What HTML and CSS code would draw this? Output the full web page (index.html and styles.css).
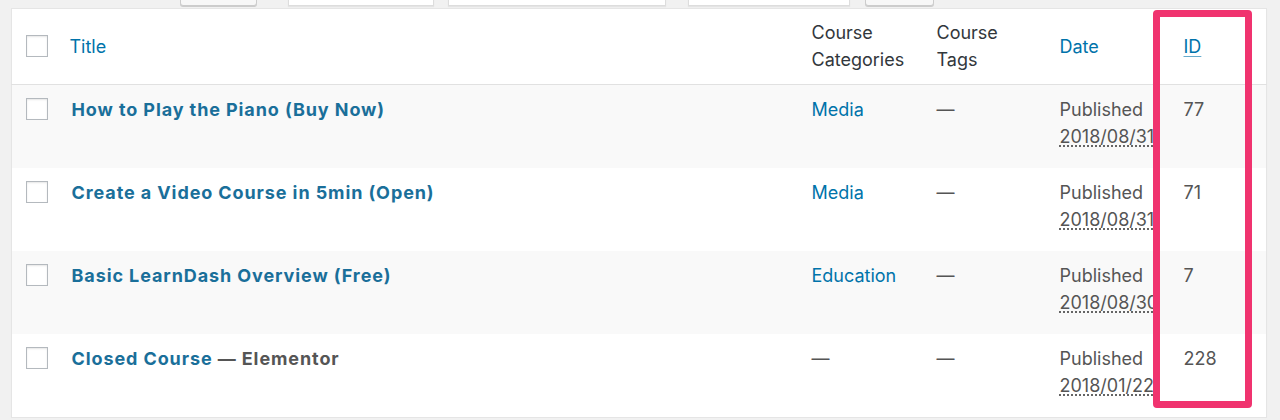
FILE: index.html
```html
<!DOCTYPE html>
<html lang="en">

<head>
    <meta charset="UTF-8">
    <meta name="viewport" content="width=device-width, initial-scale=1.0">
    <title>Courses</title>
    <link rel="stylesheet" href="styles.css">
</head>

<body>

    <div class="wrap">

        <!-- Filtros (solo se ve el borde inferior) -->
        <div class="tablenav">
            <span class="nav-btn btn-a"></span>
            <span class="nav-input input-a"></span>
            <span class="nav-input input-b"></span>
            <span class="nav-input input-c"></span>
            <span class="nav-btn btn-b"></span>
        </div>

        <table class="list-table">
            <colgroup>
                <col class="col-cb">
                <col>
                <col class="col-cat">
                <col class="col-tags">
                <col class="col-date">
                <col class="col-id">
            </colgroup>
            <thead>
                <tr>
                    <th class="check-column"><input type="checkbox" class="cb"></th>
                    <th><a href="#" class="sort-link">Title</a></th>
                    <th>Course Categories</th>
                    <th>Course Tags</th>
                    <th><a href="#" class="sort-link">Date</a></th>
                    <th><a href="#" class="sort-link sorted">ID</a></th>
                </tr>
            </thead>
            <tbody>
                <tr class="alt">
                    <th class="check-column"><input type="checkbox" class="cb"></th>
                    <td class="title-cell"><strong><a href="#" class="row-title">How to Play the Piano (Buy Now)</a></strong></td>
                    <td><a href="#" class="term">Media</a></td>
                    <td class="muted">—</td>
                    <td class="muted">Published<br><abbr title="2018/08/31 9:00:00 am">2018/08/31</abbr></td>
                    <td class="muted">77</td>
                </tr>
                <tr>
                    <th class="check-column"><input type="checkbox" class="cb"></th>
                    <td class="title-cell"><strong><a href="#" class="row-title">Create a Video Course in 5min (Open)</a></strong></td>
                    <td><a href="#" class="term">Media</a></td>
                    <td class="muted">—</td>
                    <td class="muted">Published<br><abbr title="2018/08/31 9:00:00 am">2018/08/31</abbr></td>
                    <td class="muted">71</td>
                </tr>
                <tr class="alt">
                    <th class="check-column"><input type="checkbox" class="cb"></th>
                    <td class="title-cell"><strong><a href="#" class="row-title">Basic LearnDash Overview (Free)</a></strong></td>
                    <td><a href="#" class="term">Education</a></td>
                    <td class="muted">—</td>
                    <td class="muted">Published<br><abbr title="2018/08/30 9:00:00 am">2018/08/30</abbr></td>
                    <td class="muted">7</td>
                </tr>
                <tr>
                    <th class="check-column"><input type="checkbox" class="cb"></th>
                    <td class="title-cell"><strong><a href="#" class="row-title">Closed Course</a> <span class="post-state">— Elementor</span></strong></td>
                    <td class="muted">—</td>
                    <td class="muted">—</td>
                    <td class="muted">Published<br><abbr title="2018/01/22 9:00:00 am">2018/01/22</abbr></td>
                    <td class="muted">228</td>
                </tr>
            </tbody>
        </table>

        <!-- Marca de resaltado sobre la columna ID -->
        <div class="highlight"></div>

    </div>

</body>

</html>
```

FILE: styles.css
```css
body {
    margin: 0;
    background-color: #f1f1f1;
    font-family: Inter, "Noto Sans", "Liberation Sans", sans-serif;
    font-size: 18px;
    line-height: 27px;
    color: #444;
}

.wrap {
    position: relative;
    padding: 0 13px 0 11px;
}

.tablenav {
    height: 8px;
    overflow: hidden;
    display: flex;
    align-items: flex-end;
}

.tablenav span {
    display: block;
    height: 30px;
    margin-bottom: 2px;
    box-sizing: border-box;
}

.nav-input {
    background-color: #fff;
    border: 1px solid #ddd;
    box-shadow: 0 1px 1px rgba(0, 0, 0, 0.05);
}

.nav-btn {
    background-color: #f7f7f7;
    border: 1px solid #ccc;
    border-radius: 3px;
    box-shadow: 0 1px 0 #ccc;
}

.btn-a {
    margin-left: 169px;
    width: 77px;
}

.input-a {
    margin-left: 31px;
    width: 146px;
}

.input-b {
    margin-left: 14px;
    width: 218px;
}

.input-c {
    margin-left: 22px;
    width: 162px;
}

.btn-b {
    margin-left: 15px;
    width: 69px;
}

.list-table {
    width: 100%;
    table-layout: fixed;
    border-collapse: collapse;
    background-color: #fff;
    border: 1px solid #e5e5e5;
    box-shadow: 0 1px 1px rgba(0, 0, 0, 0.04);
}

.col-cb {
    width: 45px;
}

.col-cat {
    width: 125px;
}

.col-tags {
    width: 123px;
}

.col-date {
    width: 124px;
}

.col-id {
    width: 97px;
}

.list-table thead th {
    padding: 10px 14px 11px;
    text-align: left;
    font-weight: 400;
    color: #32373c;
    vertical-align: middle;
    border-bottom: 1px solid #e1e1e1;
}

.list-table thead th:nth-child(2) {
    padding-left: 13px;
}

.list-table tbody th,
.list-table tbody td {
    padding: 11px 14px 18px;
    text-align: left;
    vertical-align: top;
    white-space: nowrap;
}

.list-table tbody .title-cell {
    padding-left: 15px;
}

.list-table .check-column {
    padding-left: 14px;
    padding-right: 0;
}

.list-table tbody tr.alt {
    background-color: #f9f9f9;
}

.cb {
    -webkit-appearance: none;
    appearance: none;
    display: block;
    width: 22px;
    height: 22px;
    margin: 0;
    background-color: #fff;
    border: 1px solid #b4b9be;
    box-shadow: inset 0 1px 2px rgba(0, 0, 0, 0.1);
}

.list-table tbody .cb {
    margin-top: 2px;
}

a {
    color: #0073aa;
    text-decoration: none;
}

.sorted {
    text-decoration: underline;
    text-decoration-color: rgba(0, 115, 170, 0.6);
    text-underline-offset: 3px;
}

.list-table strong {
    font-weight: 700;
    letter-spacing: 0.9px;
}

.row-title {
    color: #1a6f9a;
}

.post-state {
    color: #555;
}

.muted {
    color: #555;
}

abbr {
    text-decoration: underline dotted;
    text-underline-offset: 3px;
}

.highlight {
    position: absolute;
    top: 10px;
    left: 1153px;
    width: 99px;
    height: 398px;
    box-sizing: border-box;
    border: 7px solid #f0336f;
    border-radius: 4px;
}
```
